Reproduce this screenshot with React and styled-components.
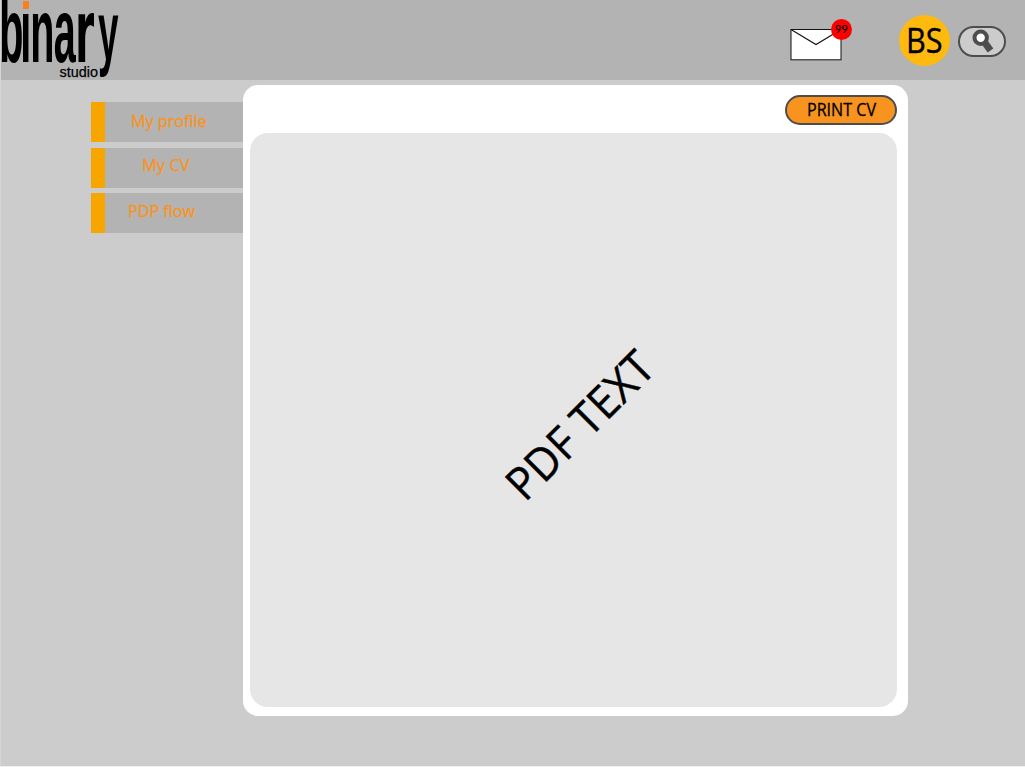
import React from "react";
import styled, { createGlobalStyle } from "styled-components";

const GlobalStyle = createGlobalStyle`
  * { box-sizing: border-box; }
  body { margin: 0; background: #efefef; }
`;

const Page = styled.div`
  width: 1025px;
  height: 766px;
  display: flex;
  flex-direction: column;
  background: #cccccc;
  border-left: 1px solid #d6d6d6;
  font-family: "Open Sans", "Noto Sans", sans-serif;
  color: #000;
  overflow: hidden;
`;

const Header = styled.header`
  height: 80px;
  flex: none;
  display: flex;
  align-items: flex-start;
  justify-content: space-between;
  background: #b3b3b3;
`;

const Logo = styled.svg`
  display: block;
  width: 120px;
  height: 80px;
`;

const Actions = styled.div`
  display: flex;
  align-items: flex-start;
  padding: 15px 19px 0 0;
`;

const Mail = styled.button`
  position: relative;
  width: 62px;
  height: 46px;
  margin: 3px 47px 0 0;
  padding: 0;
  border: 0;
  background: none;
`;

const Envelope = styled.svg`
  display: block;
  width: 52px;
  height: 33px;
  margin-top: 6px;
`;

const Badge = styled.span`
  position: absolute;
  left: 41px;
  top: 1px;
  width: 21px;
  height: 21px;
  border-radius: 50%;
  background: #ff0000;
  font: 11px/20px Lato, sans-serif;
  text-align: center;
  -webkit-text-stroke: 0.2px #000;
`;

const Avatar = styled.div`
  width: 51px;
  height: 51px;
  margin-right: 8px;
  display: flex;
  align-items: center;
  justify-content: center;
  border-radius: 50%;
  background: #ffb90f;
  font-size: 34px;
  line-height: 51px;
  -webkit-text-stroke: 0.4px #000;
`;

const Search = styled.button`
  width: 48px;
  height: 31px;
  margin-top: 11px;
  padding: 0;
  border: 2px solid #4d4d4d;
  border-radius: 16px;
  background: #cccccc;
`;

const SearchIcon = styled.svg`
  display: block;
  width: 44px;
  height: 27px;
`;

const Body = styled.div`
  flex: 1;
  display: flex;
  align-items: flex-start;
`;

const Nav = styled.nav`
  width: 152px;
  margin: 22px 0 0 90px;
  display: flex;
  flex-direction: column;
  gap: 5.5px;
`;

const NavItem = styled.a`
  height: 40px;
  padding-left: ${(p) => p.$indent}px;
  border-left: 14.5px solid #f7a600;
  background: #b3b3b3;
  color: #f7931e;
  font-size: 17px;
  line-height: ${(p) => p.$line}px;
  -webkit-text-stroke: 0.3px #f7931e;
`;

const Condensed = styled.span`
  display: inline-block;
  white-space: nowrap;
  transform: scaleX(${(p) => p.$scale});
  transform-origin: ${(p) => p.$origin || "center"};
`;

const Card = styled.main`
  width: 665px;
  height: 631px;
  margin-top: 5px;
  padding: 10px 11px 9px 7px;
  display: flex;
  flex-direction: column;
  border-radius: 15px;
  background: #fff;
`;

const PrintButton = styled.button`
  align-self: flex-end;
  width: 112px;
  height: 30px;
  margin-bottom: 8px;
  padding: 0 0 2px 1px;
  display: flex;
  align-items: center;
  justify-content: center;
  border: 2px solid #4d4d4d;
  border-radius: 15px;
  background: #f7931e;
  color: #000;
  font: 17.5px/24px "Open Sans", "Noto Sans", sans-serif;
  -webkit-text-stroke: 0.3px #000;
`;

const Preview = styled.section`
  flex: 1;
  padding: 8px 0 0 11px;
  display: flex;
  align-items: center;
  justify-content: center;
  border-radius: 18px;
  background: #e6e6e6;
`;

const PreviewText = styled.span`
  font-size: 45.5px;
  line-height: 60px;
  white-space: nowrap;
  transform: rotate(-45deg) scaleX(0.95);
  -webkit-text-stroke: 0.4px #000;
`;

const links = [
  { label: "My profile", indent: 25.5, line: 38, scale: 0.95 },
  { label: "My CV", indent: 36.5, line: 34, scale: 0.97 },
  { label: "PDP flow", indent: 22.5, line: 35, scale: 0.95 },
];

export default function App() {
  return (
    <>
      <GlobalStyle />
      <Page>
        <Header>
          <Logo viewBox="1 0 120 80" role="img" aria-label="binary studio">
            <text
              transform="scale(0.44 1)"
              x="-2 46 69 122 171 223"
              y="62 62 62 62 62 59.5"
              fontFamily="Liberation Sans, sans-serif"
              fontWeight="700"
              fontSize="90"
            >
              bina<tspan fontFamily="DejaVu Sans, sans-serif" fontSize="87">r</tspan><tspan fontSize="84">y</tspan>
            </text>
            <rect x="22" y="0" width="8" height="11" fill="#b3b3b3" />
            <rect x="23" y="1" width="6" height="8" fill="#f58220" />
            <text
              x="59.5"
              y="76.5"
              fontFamily="Liberation Sans, sans-serif"
              fontSize="15"
              textLength="38.5"
              lengthAdjust="spacingAndGlyphs"
              stroke="#000"
              strokeWidth="0.25"
            >
              studio
            </text>
          </Logo>
          <Actions>
            <Mail aria-label="Messages">
              <Envelope viewBox="0 0 52 33">
                <rect x="1" y="1.5" width="50" height="30.3" fill="#fff" stroke="#111" />
                <path d="M1 1.5 26 16.5 51 1.5" fill="none" stroke="#111" strokeWidth="1.1" />
              </Envelope>
              <Badge>99</Badge>
            </Mail>
            <Avatar>
              <Condensed $scale={0.9}>BS</Condensed>
            </Avatar>
            <Search aria-label="Search">
              <SearchIcon viewBox="0 0 44 27">
                <path d="M24 13.5 30.5 22.5" stroke="#4d4d4d" strokeWidth="7" />
                <circle cx="20.7" cy="9.7" r="6.2" fill="#fff" stroke="#4d4d4d" strokeWidth="4" />
              </SearchIcon>
            </Search>
          </Actions>
        </Header>
        <Body>
          <Nav>
            {links.map((l) => (
              <NavItem key={l.label} $indent={l.indent} $line={l.line}>
                <Condensed $scale={l.scale} $origin="left center">
                  {l.label}
                </Condensed>
              </NavItem>
            ))}
          </Nav>
          <Card>
            <PrintButton>
              <Condensed $scale={0.92}>PRINT CV</Condensed>
            </PrintButton>
            <Preview>
              <PreviewText>PDF TEXT</PreviewText>
            </Preview>
          </Card>
        </Body>
      </Page>
    </>
  );
}
